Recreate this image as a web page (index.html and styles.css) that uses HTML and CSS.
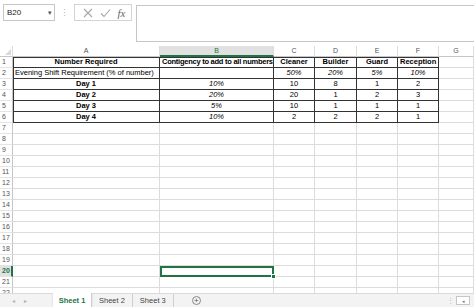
FILE: index.html
```html
<!DOCTYPE html>
<html lang="en">
<head>
  <meta charset="UTF-8">
  <title>Book1 - Excel</title>
  <link rel="stylesheet" href="styles.css">
</head>
<body>
  <div class="app">
    <div class="formula-bar">
      <div class="namebox"><span>B20</span><span class="caret">&#9662;</span></div>
      <div class="grip">&#8942;</div>
      <div class="fbuttons">
        <svg class="ico" width="10" height="10" viewBox="0 0 10 10"><path d="M1 1L9 9M9 1L1 9" stroke="#a6a6a6" stroke-width="1.1" fill="none"/></svg>
        <svg class="ico" width="11" height="10" viewBox="0 0 11 10"><path d="M1 5.5L4 8.5L10 1.5" stroke="#a6a6a6" stroke-width="1.1" fill="none"/></svg>
        <span class="fx">fx</span>
      </div>
      <div class="finput"></div>
    </div>

    <div class="sheet">
      <div class="row head">
        <div class="corner"><span class="tri"></span></div>
        <div>A</div><div class="sel">B</div><div>C</div><div>D</div><div>E</div><div>F</div><div>G</div>
      </div>
      <div class="row">
        <div class="rh">1</div>
        <div class="t first top bold c">Number Required</div>
        <div class="t top bold clip">Contigency to add to all numbers</div>
        <div class="t top bold c">Cleaner</div>
        <div class="t top bold c">Builder</div>
        <div class="t top bold c">Guard</div>
        <div class="t top bold c">Reception</div>
        <div></div>
      </div>
      <div class="row">
        <div class="rh">2</div>
        <div class="t first">Evening Shift Requirement (% of number)</div>
        <div class="t"></div>
        <div class="t c it">50%</div>
        <div class="t c it">20%</div>
        <div class="t c it">5%</div>
        <div class="t c it">10%</div>
        <div></div>
      </div>
      <div class="row">
        <div class="rh">3</div>
        <div class="t first bold c">Day 1</div>
        <div class="t c it">10%</div>
        <div class="t c">10</div><div class="t c">8</div><div class="t c">1</div><div class="t c">2</div>
        <div></div>
      </div>
      <div class="row">
        <div class="rh">4</div>
        <div class="t first bold c">Day 2</div>
        <div class="t c it">20%</div>
        <div class="t c">20</div><div class="t c">1</div><div class="t c">2</div><div class="t c">3</div>
        <div></div>
      </div>
      <div class="row">
        <div class="rh">5</div>
        <div class="t first bold c">Day 3</div>
        <div class="t c it">5%</div>
        <div class="t c">10</div><div class="t c">1</div><div class="t c">1</div><div class="t c">1</div>
        <div></div>
      </div>
      <div class="row">
        <div class="rh">6</div>
        <div class="t first bold c">Day 4</div>
        <div class="t c it">10%</div>
        <div class="t c">2</div><div class="t c">2</div><div class="t c">2</div><div class="t c">1</div>
        <div></div>
      </div>
      <div class="row"><div class="rh">7</div><div></div><div></div><div></div><div></div><div></div><div></div><div></div></div>
      <div class="row"><div class="rh">8</div><div></div><div></div><div></div><div></div><div></div><div></div><div></div></div>
      <div class="row"><div class="rh">9</div><div></div><div></div><div></div><div></div><div></div><div></div><div></div></div>
      <div class="row"><div class="rh">10</div><div></div><div></div><div></div><div></div><div></div><div></div><div></div></div>
      <div class="row"><div class="rh">11</div><div></div><div></div><div></div><div></div><div></div><div></div><div></div></div>
      <div class="row"><div class="rh">12</div><div></div><div></div><div></div><div></div><div></div><div></div><div></div></div>
      <div class="row"><div class="rh">13</div><div></div><div></div><div></div><div></div><div></div><div></div><div></div></div>
      <div class="row"><div class="rh">14</div><div></div><div></div><div></div><div></div><div></div><div></div><div></div></div>
      <div class="row"><div class="rh">15</div><div></div><div></div><div></div><div></div><div></div><div></div><div></div></div>
      <div class="row"><div class="rh">16</div><div></div><div></div><div></div><div></div><div></div><div></div><div></div></div>
      <div class="row"><div class="rh">17</div><div></div><div></div><div></div><div></div><div></div><div></div><div></div></div>
      <div class="row"><div class="rh">18</div><div></div><div></div><div></div><div></div><div></div><div></div><div></div></div>
      <div class="row"><div class="rh">19</div><div></div><div></div><div></div><div></div><div></div><div></div><div></div></div>
      <div class="row"><div class="rh sel">20</div><div></div><div class="active"><span class="handle"></span></div><div></div><div></div><div></div><div></div><div></div></div>
      <div class="row"><div class="rh">21</div><div></div><div></div><div></div><div></div><div></div><div></div><div></div></div>
      <div class="row"><div class="rh">22</div><div></div><div></div><div></div><div></div><div></div><div></div><div></div></div>
    </div>

    <div class="tabbar">
      <div class="nav"><span>&#9666;</span><span>&#9656;</span></div>
      <div class="tab on">Sheet 1</div>
      <div class="tab">Sheet 2</div>
      <div class="tab">Sheet 3</div>
      <div class="add">+</div>
      <div class="spacer"></div>
      <div class="grip small">&#8942;</div>
      <div class="hscroll">&#9666;</div>
    </div>
  </div>
</body>
</html>
```

FILE: styles.css
```css
* { box-sizing: border-box; }
html, body {
  margin: 0;
  padding: 0;
  background: #fff;
}
body {
  font-family: "Liberation Sans", Arial, sans-serif;
  font-size: 7.5px;
  color: #000;
  width: 474px;
  height: 307px;
  overflow: hidden;
}
.app {
  display: flex;
  flex-direction: column;
  height: 307px;
}

/* formula bar */
.formula-bar {
  height: 46px;
  flex: none;
  display: flex;
  align-items: flex-start;
  padding-top: 4px;
}
.namebox {
  margin-left: 3px;
  width: 52px;
  height: 17px;
  border: 1px solid #c6c6c6;
  display: flex;
  align-items: center;
  justify-content: space-between;
  padding: 0 2px 0 3px;
  font-size: 8px;
  color: #222;
}
.caret { font-size: 7px; color: #555; }
.grip {
  width: 19px;
  height: 17px;
  display: flex;
  align-items: center;
  justify-content: center;
  color: #b5b5b5;
  font-size: 9px;
}
.fbuttons {
  width: 58px;
  height: 17px;
  border: 1px solid #d4d4d4;
  display: flex;
  align-items: center;
  justify-content: space-around;
  padding: 0 2px 0 4px;
}
.fx {
  font-family: "Liberation Serif", serif;
  font-style: italic;
  font-size: 11px;
  color: #666;
}
.finput {
  flex: 1;
  margin-left: 4px;
  margin-top: 1px;
  height: 37px;
  border: 1px solid #c6c6c6;
  border-right: none;
}

/* grid */
.sheet {
  flex: 1;
  overflow: hidden;
}
.row {
  display: grid;
  grid-template-columns: 13px 147px 114px 41px 42px 41px 41px 35px;
  height: 11px;
}
.row > div {
  border-right: 1px solid #dcdcdc;
  border-bottom: 1px solid #dcdcdc;
  white-space: nowrap;
  overflow: hidden;
  line-height: 10px;
  padding: 0 2px;
}
.head > div {
  text-align: center;
  color: #555;
  font-size: 7px;
  border-bottom-color: #c6c6c6;
  border-right-color: #dcdcdc;
}
.head > .sel {
  background: #e1e1e1;
  color: #217346;
  border-bottom: 2px solid #217346;
}
.corner { position: relative; }
.tri {
  position: absolute;
  right: 1px;
  bottom: 1px;
  width: 0;
  height: 0;
  border-left: 6px solid transparent;
  border-bottom: 6px solid #d8d8d8;
}
.row > .rh {
  color: #555;
  font-size: 7px;
  text-align: left;
  padding-left: 2px;
  border-right-color: #c6c6c6;
  border-bottom-color: #e4e4e4;
}
.row > .rh.sel {
  background: #e1e1e1;
  color: #217346;
  font-weight: bold;
  border-right: 2px solid #217346;
}

/* bordered table */
.row > .t {
  border-right-color: #333;
  border-bottom-color: #333;
}
.row > .first { box-shadow: inset 1px 0 #333; }
.row > .top { box-shadow: inset 0 1px #333; }
.row > .first.top { box-shadow: inset 1px 1px #333; }
.row > .c { text-align: center; }
.bold { font-weight: bold; }
.it { font-style: italic; }
.clip { padding-left: 1px; letter-spacing: -0.25px; }

.row > .active {
  position: relative;
  overflow: visible;
  border: 2px solid #217346;
}
.handle {
  position: absolute;
  right: -4px;
  bottom: -4px;
  width: 5px;
  height: 5px;
  background: #217346;
  border: 1px solid #fff;
}

/* sheet tabs */
.tabbar {
  height: 14px;
  flex: none;
  background: #f3f3f3;
  border-top: 1px solid #dadada;
  display: flex;
  align-items: stretch;
  font-size: 7.5px;
  color: #444;
}
.nav {
  width: 53px;
  display: flex;
  gap: 9px;
  padding-left: 12px;
  align-items: center;
  color: #b0b0b0;
  font-size: 6px;
}
.tab {
  padding: 0 7px;
  display: flex;
  align-items: center;
  border-right: 1px solid #cfcfcf;
}
.tab.on {
  background: #fff;
  color: #217346;
  font-weight: bold;
  width: 39px;
  margin-top: -1px;
  box-shadow: 0 1px 2px rgba(0,0,0,0.15);
  justify-content: center;
  padding: 0;
}
.add {
  margin-left: 18px;
  width: 9px;
  height: 9px;
  align-self: center;
  border: 1px solid #888;
  border-radius: 50%;
  font-size: 8px;
  line-height: 7px;
  text-align: center;
  color: #555;
}
.spacer { flex: 1; }
.grip.small {
  width: 12px;
  height: auto;
  font-size: 7px;
}
.hscroll {
  width: 14px;
  margin: 2px 4px 2px 0;
  border: 1px solid #c6c6c6;
  background: #fff;
  color: #777;
  font-size: 5px;
  display: flex;
  align-items: center;
  justify-content: center;
}
```
